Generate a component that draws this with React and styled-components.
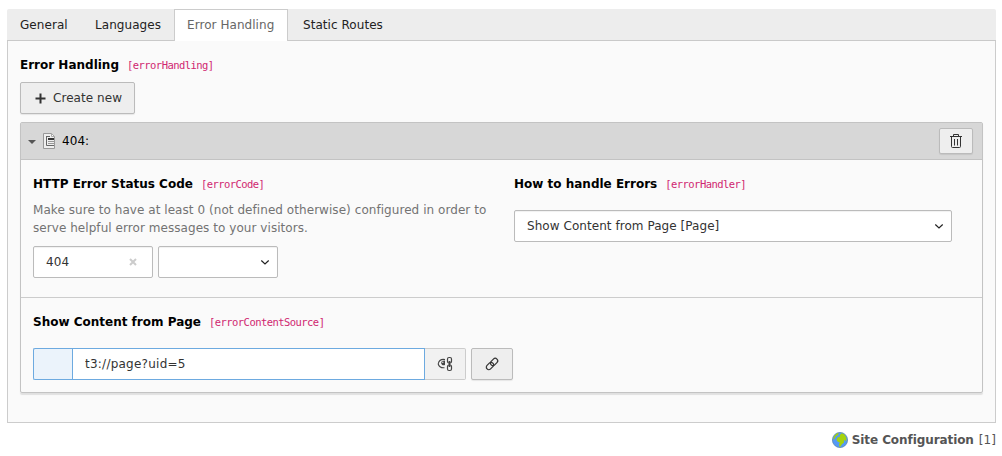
import React from "react";
import styled, { createGlobalStyle } from "styled-components";

const Global = createGlobalStyle`
  * { box-sizing: border-box; }
  body { margin: 0; background: #fff; color: #333; font: 12px/18px "DejaVu Sans", Verdana, sans-serif; letter-spacing: .055px; }
  button, input { font: inherit; color: inherit; letter-spacing: inherit; }
`;
const Page = styled.main`width: 1002px; height: 456px; padding: 9px 6px 0 7px; overflow: hidden;`;
const Tabs = styled.nav`display: flex; height: 32px; background: #ededed; border-bottom: 1px solid #c9c9c9; border-radius: 2px 2px 0 0;`;
const Tab = styled.a`
  height: 32px; padding: 7px 13px 0 13px; width: ${p => p.$w}px; white-space: nowrap; color: #222;
  ${p => p.$active && "color: #666; background: #fff; border: 1px solid #ccc; border-bottom: 0; padding: 6px 12px 0;"}
`;
const LastTab = styled(Tab)`padding-left: 15px;`;
const Panel = styled.section`height: 382px; padding: 15px 12px 0; background: #fafafa; border: 1px solid #ccc; border-top: 0;`;
const Heading = styled.h2`
  display: flex; align-items: baseline; margin: 0; height: 18px; color: #000; white-space: nowrap;
  font: 700 12px/18px "DejaVu Sans", Verdana, sans-serif; letter-spacing: 0;
`;
const Code = styled.code`
  margin-left: 8px; color: #d02670; font: 400 10.5px/18px "DejaVu Sans Mono", monospace; letter-spacing: -0.55px;
`;
const Button = styled.button`
  display: flex; align-items: center; justify-content: center; padding: 0; flex: none;
  width: ${p => p.$w}px; height: ${p => p.$h || 32}px; color: #333;
  background: #eee; border: 1px solid #bbb; border-radius: 2px; box-shadow: 0 1px 1px rgba(0,0,0,.08);
`;
const CreateButton = styled(Button)`margin-top: 8px; gap: 7px; padding-left: 2px;`;
const Record = styled.article`
  margin-top: 8px; height: 271px; border: 1px solid #c3c3c3; border-radius: 2px; box-shadow: 0 2px 1px rgba(0,0,0,.1);
`;
const RecordHeader = styled.header`
  display: flex; align-items: center; height: 37px; padding: 0 9px 0 7px; background: #d7d7d7; border-bottom: 1px solid #c3c3c3; color: #000;
`;
const RecordTitle = styled.span`flex: 1; margin-left: 7px;`;
const Caret = styled.svg`margin: 2px 7px 0 0;`;
const Row = styled.div`display: flex; height: 138px; padding: 15px 12px 0; border-bottom: 1px solid #ccc;`;
const Column = styled.div`width: ${p => p.$w}px; flex: none;`;
const Help = styled.p`margin: 8px 0 0; color: #737373; white-space: nowrap;`;
const Controls = styled.div`display: flex; gap: 5px; margin-top: ${p => p.$top}px;`;
const Field = styled.div`
  display: flex; align-items: center; justify-content: space-between; width: ${p => p.$w}px; height: 32px;
  padding: 0 ${p => p.$right || 7}px 0 12px; background: #fff; border: 1px solid #bbb; border-radius: 2px;
  box-shadow: inset 0 1px 1px rgba(0,0,0,.06);
`;
const Source = styled.div`padding: 15px 12px 0;`;
const Group = styled.div`display: flex;`;
const Addon = styled.div`width: 39px; height: 32px; background: #ebf3fb; border: 1px solid #6daae0; border-right: 0; border-radius: 2px 0 0 2px;`;
const LinkInput = styled.input`width: 353px; height: 32px; padding: 0 12px 1px; border: 1px solid #6daae0; border-radius: 0; background: #fff; outline: 0; letter-spacing: .24px;`;
const Toggle = styled(Button)`background: #f1f1f1; border-color: #ccc; border-left: 0; border-radius: 0 2px 2px 0; box-shadow: none;`;
const Footer = styled.footer`
  display: flex; justify-content: flex-end; align-items: center; margin-top: 8px; height: 18px; color: #555; white-space: nowrap;
`;
const FooterName = styled.strong`
  margin: 0 5px 0 4px; font: 700 12px/18px "DejaVu Sans", Verdana, sans-serif; letter-spacing: -.08px;
`;

const Chevron = () => <svg width="10" height="8" viewBox="0 0 10 8"><path d="m1.300 2.500 3.700 3.500 3.700-3.500" fill="none" stroke="#222" strokeWidth="1.2" /></svg>;
const Chain = () => (
  <svg width="16" height="16" viewBox="0 0 16 16" fill="none" stroke="#333" strokeWidth="1.2">
    <g transform="rotate(-45 8 8)"><rect x="1" y="5.500" width="8.200" height="5" rx="2.5" /><rect x="6.800" y="5.500" width="8.200" height="5" rx="2.5" /></g>
  </svg>
);
const ToggleIcon = () => (
  <svg width="16" height="16" viewBox="0 0 16 16" fill="none" stroke="#444">
    <path d="M8 3.500C4 2.800 1.800 5 1.200 8c.8 2.800 3 4 6.300 3.700" strokeWidth="1.1" />
    <path d="M8 4.500C5 4.500 4 5.500 4.200 7.500 5 9.500 6.500 9.500 8 9z" fill="#444" stroke="none" /><circle cx="5.800" cy="6.200" r=".8" fill="#ddd" stroke="none" />
    <rect x="10.500" y="1.500" width="4" height="5.500" rx="1.5" strokeWidth="1.2" /><rect x="10.500" y="9" width="4" height="5.500" rx="1.5" strokeWidth="1.2" />
    <path d="M12.500 5v6" strokeWidth="1.8" />
  </svg>
);
const Trash = () => (
  <svg width="16" height="16" viewBox="0 0 16 16" fill="none" stroke="#333">
    <path d="M2 3.500h12M5.500 3V1.500h5V3M3.500 4v9.500q0 1 1 1h7q1 0 1-1V4M6.500 6v6.500M9.500 6v6.500" />
  </svg>
);
const PageIcon = () => (
  <svg width="12" height="16" viewBox="0 0 12 16">
    <path d="M.5.5h8l3 3v12H.5z" fill="#efefef" stroke="#999" /><path d="M8.500 1v2.500H11" fill="#fff" stroke="#aaa" />
    <path d="M3.500 3v9.500H11M3 3.500h4" fill="none" stroke="#666" /><path d="M5 5h6v2H5z" fill="#333" /><path d="M5 8.500h6M5 10.500h6" stroke="#999" />
  </svg>
);
const Globe = () => (
  <svg width="16" height="16" viewBox="0 0 16 16">
    <circle cx="8" cy="8" r="7.6" fill="#5599f5" stroke="#5481a5" strokeWidth=".7" />
    <path d="M2.200 4 5 1.300l2 .3-1.500 2-1.800.9-1.200 2.500-1.300.5zM5.500 5.500 8 4.500 7.800 3l2-1.800L12.500 2.500 14.500 6l-.5 3.500-1.200-1.500-1 .8.3 1.700-2.200 1.700-1.300 2.300-1.200.3-.4-2.300.8-2-2-.8L4.500 8z" fill="#a5d20c" />
  </svg>
);

export default function App() {
  return (
    <><Global /><Page>
      <Tabs><Tab $w={75}>General</Tab><Tab $w={92}>Languages</Tab><Tab $w={114} $active>Error Handling</Tab><LastTab $w={110}>Static Routes</LastTab></Tabs>
      <Panel>
        <Heading>Error Handling<Code>[errorHandling]</Code></Heading>
        <CreateButton $w={115}><svg width="11" height="11"><path d="M5.500 .5v10M.5 5.500h10" stroke="#333" strokeWidth="2" /></svg><span>Create new</span></CreateButton>
        <Record>
          <RecordHeader>
            <Caret width="8" height="4"><path d="M0 0h8L4 4z" fill="#555" /></Caret>
            <PageIcon /><RecordTitle>404:</RecordTitle><Button $w={34} $h={26}><Trash /></Button>
          </RecordHeader>
          <Row>
            <Column $w={481}>
              <Heading>HTTP Error Status Code<Code>[errorCode]</Code></Heading>
              <Help>Make sure to have at least 0 (not defined otherwise) configured in order to<br />serve helpful error messages to your visitors.</Help>
              <Controls $top={9}>
                <Field $w={120} $right={15}>404<svg width="8" height="8"><path d="m1 1 6 6m0-6L1 7" stroke="#ccc" strokeWidth="2" /></svg></Field>
                <Field $w={120}><span /><Chevron /></Field>
              </Controls>
            </Column>
            <Column $w={438}>
              <Heading>How to handle Errors<Code>[errorHandler]</Code></Heading>
              <Controls $top={17}><Field $w={438}>Show Content from Page [Page]<Chevron /></Field></Controls>
            </Column>
          </Row>
          <Source>
            <Heading>Show Content from Page<Code>[errorContentSource]</Code></Heading>
            <Controls $top={17}><Group><Addon /><LinkInput defaultValue="t3://page?uid=5" /><Toggle $w={41}><ToggleIcon /></Toggle></Group><Button $w={42}><Chain /></Button></Controls>
          </Source>
        </Record>
      </Panel>
      <Footer><Globe /><FooterName>Site Configuration</FooterName>[1]</Footer>
    </Page></>
  );
}
